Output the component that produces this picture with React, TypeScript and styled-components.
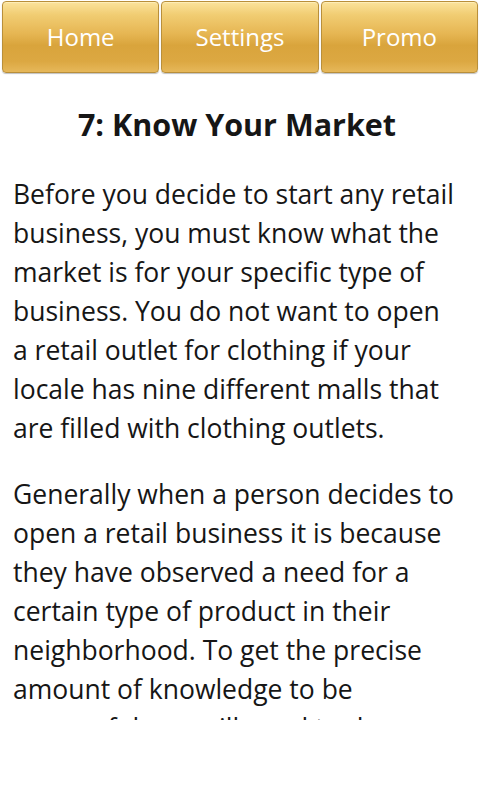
import styled, { createGlobalStyle } from "styled-components";

const GlobalStyle = createGlobalStyle`
  html, body {
    margin: 0;
    padding: 0;
    background: #fff;
  }
  body {
    font-family: "Open Sans", "Noto Sans", sans-serif;
  }
`;

const Screen = styled.div`
  width: 480px;
  height: 800px;
  background: #fff;
  display: flex;
  flex-direction: column;
`;

const NavBar = styled.nav`
  display: flex;
  gap: 2px;
  padding: 1px 2px 0;
  height: 73px;
  box-sizing: border-box;
`;

const NavButton = styled.button`
  flex: 1;
  height: 72px;
  border: 1px solid #b98f3a;
  border-radius: 4px;
  background: linear-gradient(
    to bottom,
    #fbe39c 0%,
    #f1cd73 18%,
    #e6b653 45%,
    #d9a43c 62%,
    #dca842 85%,
    #e6b85a 100%
  );
  box-shadow: inset 0 1px 0 rgba(255, 240, 190, 0.8), 0 1px 1px rgba(0, 0, 0, 0.25);
  color: #fff;
  font-family: "Open Sans", sans-serif;
  font-size: 24px;
  padding: 0 0 1px;
  cursor: pointer;
`;

const Content = styled.main`
  height: 647px;
  overflow: hidden;
  padding: 0 22px 0 13px;
  color: #161616;
`;

const Title = styled.h1`
  margin: 30px -9px 30px 0;
  text-align: center;
  font-size: 30.5px;
  font-weight: 700;
  line-height: 42px;
  padding-right: 6px;
`;

const Paragraph = styled.p`
  margin: 0 0 27px;
  font-size: 26.5px;
  line-height: 39px;
`;

const App = () => {
  return (
    <>
      <GlobalStyle />
      <Screen>
        <NavBar>
          <NavButton>Home</NavButton>
          <NavButton>Settings</NavButton>
          <NavButton>Promo</NavButton>
        </NavBar>
        <Content>
          <Title>7: Know Your Market</Title>
          <Paragraph>
            Before you decide to start any retail business, you must know what the market is for
            your specific type of business. You do not want to open a retail outlet for clothing if
            your locale has nine different malls that are filled with clothing outlets.
          </Paragraph>
          <Paragraph>
            Generally when a person decides to open a retail business it is because they have
            observed a need for a certain type of product in their neighborhood. To get the precise
            amount of knowledge to be successful you will need to do some research.
          </Paragraph>
        </Content>
      </Screen>
    </>
  );
};

export default App;
